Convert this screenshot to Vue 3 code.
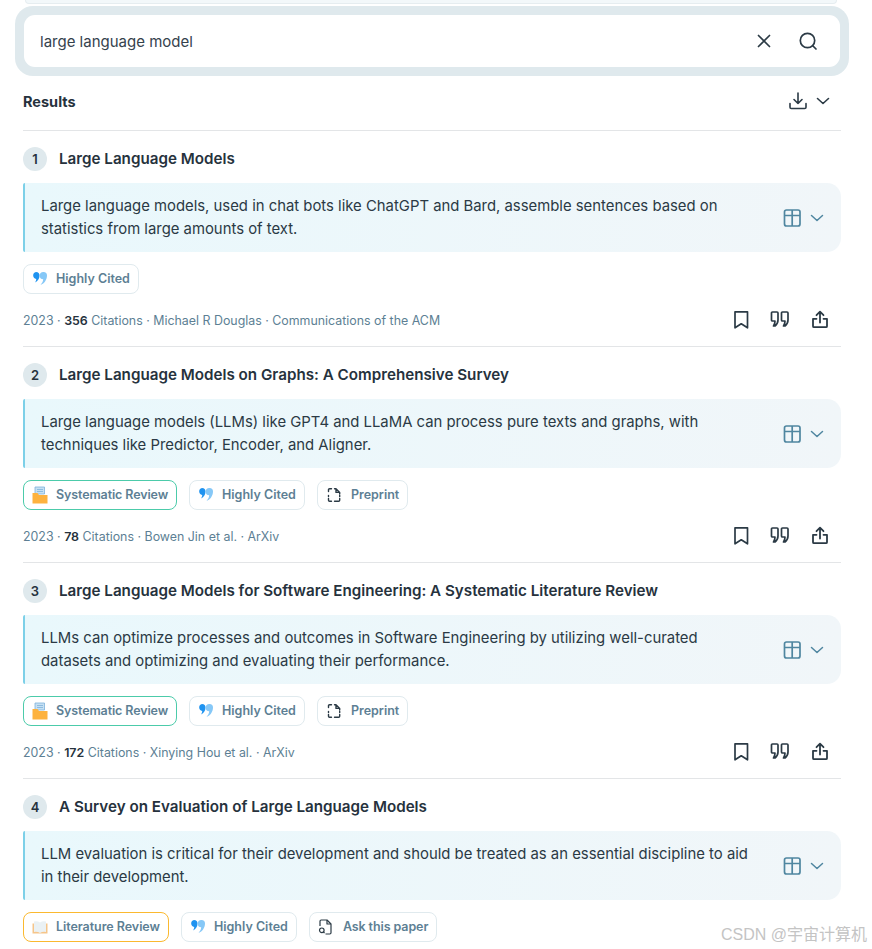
<script setup>
const results = [
  { n: 1, title: 'Large Language Models', summary: 'Large language models, used in chat bots like ChatGPT and Bard, assemble sentences based on statistics from large amounts of text.', tags: ['cited'], year: 2023, cites: 356, authors: 'Michael R Douglas', venue: 'Communications of the ACM' },
  { n: 2, title: 'Large Language Models on Graphs: A Comprehensive Survey', summary: 'Large language models (LLMs) like GPT4 and LLaMA can process pure texts and graphs, with techniques like Predictor, Encoder, and Aligner.', tags: ['systematic', 'cited', 'preprint'], year: 2023, cites: 78, authors: 'Bowen Jin et al.', venue: 'ArXiv' },
  { n: 3, title: 'Large Language Models for Software Engineering: A Systematic Literature Review', summary: 'LLMs can optimize processes and outcomes in Software Engineering by utilizing well-curated datasets and optimizing and evaluating their performance.', tags: ['systematic', 'cited', 'preprint'], year: 2023, cites: 172, authors: 'Xinying Hou et al.', venue: 'ArXiv' },
  { n: 4, title: 'A Survey on Evaluation of Large Language Models', summary: 'LLM evaluation is critical for their development and should be treated as an essential discipline to aid in their development.', tags: ['literature', 'cited', 'ask'], year: null },
]
const labels = { cited: 'Highly Cited', systematic: 'Systematic Review', preprint: 'Preprint', literature: 'Literature Review', ask: 'Ask this paper' }
</script>

<template>
  <div class="page">
    <div class="sliver"></div>
    <div class="search-ring">
      <div class="search">
        <span class="query">large language model</span>
        <svg class="s-ico" width="24" height="24" viewBox="0 0 24 24" fill="none" stroke="#2b3a45" stroke-width="1.7" stroke-linecap="round"><path d="M6.5 6.5l11 11M17.5 6.5l-11 11"/></svg>
        <svg class="s-ico" width="24" height="24" viewBox="0 0 24 24" fill="none" stroke="#2b3a45" stroke-width="1.7" stroke-linecap="round"><circle cx="11.5" cy="11.5" r="7.2"/><path d="M17 17l3 3"/></svg>
      </div>
    </div>

    <div class="results-head">
      <span class="results-title">Results</span>
      <div class="dl">
        <svg width="18" height="18" viewBox="0 0 18 18" fill="none" stroke="#2b3a45" stroke-width="1.6" stroke-linecap="round" stroke-linejoin="round"><path d="M9 1v10.500M5 7.500l4 4 4-4M1 11.500v3.700q0 1.300 1.300 1.300h13.400q1.300 0 1.300-1.300v-3.700"/></svg>
        <svg width="14" height="14" viewBox="0 0 14 14" fill="none" stroke="#2b3a45" stroke-width="1.6" stroke-linecap="round" stroke-linejoin="round"><path d="M1.500 4.500L7 9.500l5.500-5"/></svg>
      </div>
    </div>

    <article v-for="r in results" :key="r.n" class="result">
      <div class="title-row">
        <span class="num">{{ r.n }}</span>
        <h3 class="title">{{ r.title }}</h3>
      </div>
      <div class="summary">
        <p>{{ r.summary }}</p>
        <div class="sum-tools">
          <svg width="18" height="18" viewBox="0 0 18 18" fill="none" stroke="#4f86a0" stroke-width="1.700"><rect x="1.500" y="1" width="15.500" height="16" rx="2"/><path d="M1.500 6.500H17M9.200 1v16"/></svg>
          <svg width="14" height="14" viewBox="0 0 14 14" fill="none" stroke="#4f86a0" stroke-width="1.500" stroke-linecap="round" stroke-linejoin="round"><path d="M1.500 4.500L7 9.500l5.500-5"/></svg>
        </div>
      </div>
      <div class="tags">
        <span v-for="t in r.tags" :key="t" class="tag" :class="'tag-' + t">
          <svg v-if="t === 'cited'" width="16" height="15" viewBox="0 0 16 15"><path d="M4 1a3.500 3.500 0 0 1 3.500 3.500c0 3-1.500 5.500-4.500 7 1-1.500 1.200-2.600 1.200-3.600A3.500 3.500 0 0 1 4 1z" fill="#1f93f0"/><path d="M11.500 1a3.500 3.500 0 0 1 3.500 3.500c0 4-2.500 8-6.500 9.500 1.500-2 2.700-3.500 2.700-5.700A3.500 3.500 0 0 1 11.500 1z" fill="#86c8f7"/></svg>
          <svg v-else-if="t === 'systematic'" width="16" height="18" viewBox="0 0 16 18"><path d="M3 1h9.500v7H3z" fill="#c6e0f3" stroke="#7fb2da" stroke-width=".8"/><path d="M5 3.500h6M5 5.500h6" stroke="#7fb2da" stroke-width=".8"/><path d="M0.500 7h5l1.500 2h8.500v8.500H0.500z" fill="#fdb23e"/></svg>
          <svg v-else-if="t === 'preprint'" width="16" height="16" viewBox="0 0 16 16" fill="none" stroke="#2b3a45" stroke-width="1.400" stroke-linecap="round" stroke-linejoin="round"><path d="M2.500 4.500V2.800q0-1.100 1.100-1.100H5.500M8.500 1.700h1.500L13.700 5.400v1.600M10 1.700v3.700h3.700M2.500 8.500v1M2.500 11.500v1.800q0 1 1.100 1H5.500M8.500 14.300h4.100q1.100 0 1.100-1.100v-1.700M13.700 8.500v1"/></svg>
          <svg v-else-if="t === 'literature'" width="16" height="14" viewBox="0 0 16 14"><path d="M0.500 3.500h15V13.500H0.500z" fill="#f5c58a"/><path d="M2 1.500q3.500-.8 6 1 2.500-1.800 6-1V12q-3.500-.6-6 1-2.500-1.600-6-1z" fill="#eaf1f4"/></svg>
          <svg v-else width="15" height="16" viewBox="0 0 15 16" fill="none" stroke="#2b3a45" stroke-width="1.200" stroke-linejoin="round"><path d="M2 7V2.200Q2 1 3.200 1H9l4 4v8.800q0 1.200-1.200 1.200H7.500"/><path d="M9 1v4h4"/><circle cx="3.800" cy="11.300" r="2.300"/><path d="M5.500 13l1 1.200"/></svg>
          <span>{{ labels[t] }}</span>
        </span>
      </div>
      <template v-if="r.year">
        <div class="meta-row">
          <div class="meta">
            {{ r.year }} · <b>{{ r.cites }}</b> Citations · {{ r.authors }} · {{ r.venue }}
          </div>
          <div class="actions">
            <svg width="18" height="20" viewBox="0 0 18 20" fill="none" stroke="#2b3a45" stroke-width="1.700" stroke-linejoin="round"><path d="M3 1.800h12.500v16l-6.250-4L3 17.800z"/></svg>
            <svg width="22" height="20" viewBox="0 0 22 20" fill="none" stroke="#2b3a45" stroke-width="1.700" stroke-linejoin="round"><path d="M2.500 3q0-1 1-1H8q1 0 1 1v7q0 3.500-3 6H4.500Q6 14 6 11H3.500q-1 0-1-1zM12.500 3q0-1 1-1H18q1 0 1 1v7q0 3.500-3 6h-1.500q1.500-2 1.500-5h-2.500q-1 0-1-1z"/></svg>
            <svg width="20" height="20" viewBox="0 0 20 20" fill="none" stroke="#2b3a45" stroke-width="1.800" stroke-linecap="round" stroke-linejoin="round"><path d="M10 12.500V1.700M6.500 5.200L10 1.700l3.500 3.500M6.500 8.800H3V16.200q0 1 1 1h12q1 0 1-1V8.800h-3.500"/></svg>
          </div>
        </div>
      </template>
    </article>

    <div class="watermark">CSDN @宇宙计算机</div>
  </div>
</template>

<style scoped>
.page {
  position: relative;
  height: 949px;
  overflow: hidden;
  box-sizing: border-box;
  padding: 0 31px 0 23px;
  background: #fff;
  font-family: Inter, "Noto Sans", sans-serif;
  color: #26323d;
}
.sliver {
  box-sizing: border-box;
  height: 4px;
  width: 812px;
  margin-left: 2px;
  border: 1px solid #e6edf0;
  border-top: 0;
  border-radius: 0 0 14px 14px;
  background: #f3f8fa;
}
.search-ring {
  margin: 2px -8px 0;
  padding: 9px;
  border-radius: 18px;
  background: #dfe9ed;
}
.search {
  display: flex;
  align-items: center;
  height: 52px;
  padding: 0 20px 0 16px;
  border-radius: 11px;
  background: #fff;
  gap: 20px;
}
.query {
  flex: 1;
  font-size: 15px;
  color: #35424d;
}
.results-head {
  display: flex;
  align-items: center;
  justify-content: space-between;
  height: 50px;
  padding-bottom: 4px;
  border-bottom: 1px solid #e3e5e7;
}
.results-title {
  font-size: 14.500px;
  font-weight: 700;
}
.dl {
  display: flex;
  align-items: center;
  gap: 9px;
  padding-right: 11px;
}
.result {
  height: 216px;
  box-sizing: border-box;
  border-bottom: 1px solid #e3e5e7;
}
.title-row {
  display: flex;
  align-items: center;
  gap: 12px;
  height: 52px;
  box-sizing: border-box;
  padding-top: 4px;
}
.num {
  width: 24px;
  height: 24px;
  border-radius: 50%;
  background: #dfe9ed;
  font-size: 13px;
  font-weight: 600;
  display: flex;
  align-items: center;
  justify-content: center;
}
.title {
  margin: 0;
  padding-bottom: 2px;
  font-size: 15.200px;
  font-weight: 600;
}
.summary {
  display: flex;
  align-items: center;
  height: 69px;
  box-sizing: border-box;
  padding: 0 17px 0 16px;
  border-left: 2px solid #7cd0e8;
  border-radius: 2px 14px 14px 2px;
  background: linear-gradient(90deg, #e9f8fc, #f1f6f9);
}
.summary p {
  margin: 0;
  flex: 1;
  max-width: 710px;
  font-size: 14.870px;
  line-height: 23px;
  color: #2b3a45;
}
.sum-tools {
  margin-left: auto;
  display: flex;
  align-items: center;
  gap: 9px;
}
.tags {
  display: flex;
  gap: 12px;
  margin-top: 12px;
}
.tag {
  display: flex;
  align-items: center;
  gap: 8px;
  height: 30px;
  box-sizing: border-box;
  padding: 0 8px 1px;
  border: 1px solid #e0eaee;
  border-radius: 8px;
  font-size: 12.500px;
  font-weight: 600;
  color: #5d7f94;
}
.tag-systematic { border-color: #4ccbaa; letter-spacing: -0.12px; }
.tag-literature { border-color: #fbb92f; letter-spacing: -0.05px; }
.tag-preprint { gap: 9px; }
.tag-ask { gap: 10px; letter-spacing: -0.1px; }
.meta-row {
  display: flex;
  align-items: center;
  justify-content: space-between;
  height: 52px;
}
.meta {
  font-size: 12.400px;
  color: #5d7f94;
}
.meta b {
  font-weight: 600;
  color: #26323d;
}
.actions {
  display: flex;
  align-items: center;
  gap: 19px;
  padding-right: 11px;
}
.watermark {
  position: absolute;
  left: 721px;
  top: 921px;
  font-size: 16px;
  color: #c4c4c4;
  font-family: "Liberation Sans", "Noto Sans CJK SC", sans-serif;
}
</style>
